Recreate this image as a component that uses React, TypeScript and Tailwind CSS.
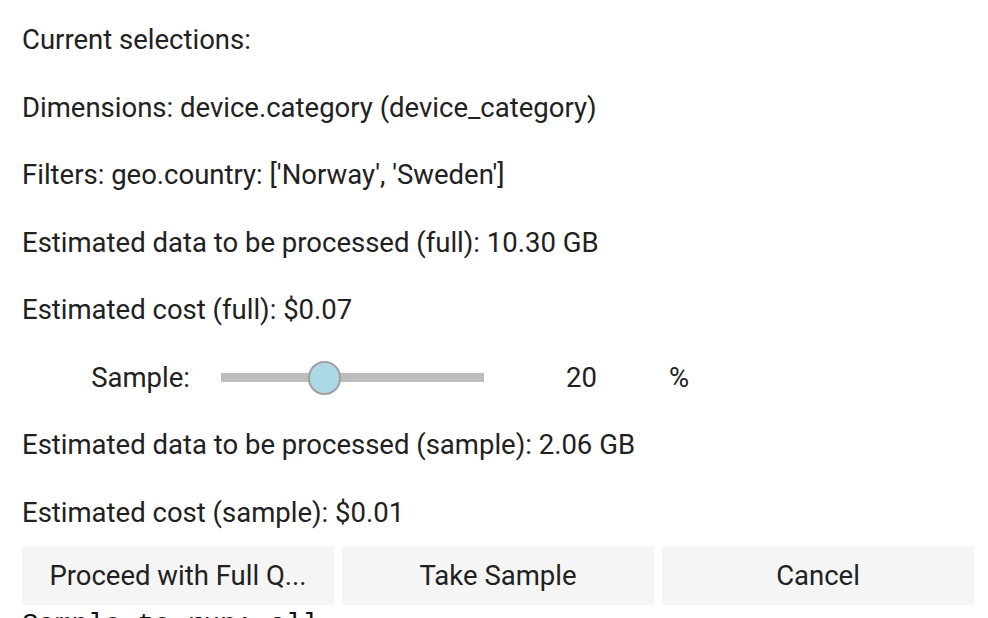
import React from "react";

const rowCls = "h-[67.5px] flex items-center shrink-0";

function TextRow({ children }: { children: React.ReactNode }) {
  return <div className={rowCls + " pl-[22px]"}>{children}</div>;
}

export default function App() {
  return (
    <div
      className="w-[988px] h-[618px] overflow-hidden bg-white text-[27.5px] text-[#212121] flex flex-col pt-[6px]"
      style={{ fontFamily: "Roboto, 'Liberation Sans', sans-serif" }}
    >
      <TextRow>Current selections:</TextRow>
      <TextRow>Dimensions: device.category (device_category)</TextRow>
      <TextRow>Filters: geo.country: ['Norway', 'Sweden']</TextRow>
      <TextRow>Estimated data to be processed (full): 10.30 GB</TextRow>
      <TextRow>Estimated cost (full): $0.07</TextRow>
      <div className={rowCls}>
        <div className="w-[190px] text-right">Sample:</div>
        <div className="ml-[31px] w-[263px] h-[9px] bg-[#bdbdbd] relative">
          <div className="absolute left-[87px] top-[-12px] w-[33px] h-[34px] rounded-full bg-[#add8e6] border-2 border-[#a0a0a0]" />
        </div>
        <div className="ml-[82px]">20</div>
        <div className="ml-[72px]">%</div>
      </div>
      <TextRow>Estimated data to be processed (sample): 2.06 GB</TextRow>
      <TextRow>Estimated cost (sample): $0.01</TextRow>
      <div className="flex gap-[8px] pl-[22px] shrink-0">
        <button className="w-[312px] h-[59px] bg-[#f5f5f5] px-[12px] whitespace-nowrap overflow-hidden text-center">
          Proceed with Full Q...
        </button>
        <button className="w-[312px] h-[59px] bg-[#f5f5f5] text-center">Take Sample</button>
        <button className="w-[312px] h-[59px] bg-[#f5f5f5] text-center">Cancel</button>
      </div>
      <div
        className="pl-[22px] mt-[4px] text-[27.5px] leading-[32px] whitespace-pre text-[#111]"
        style={{ fontFamily: "'Liberation Mono', 'DejaVu Sans Mono', monospace" }}
      >
        Sample to run: all
      </div>
    </div>
  );
}
